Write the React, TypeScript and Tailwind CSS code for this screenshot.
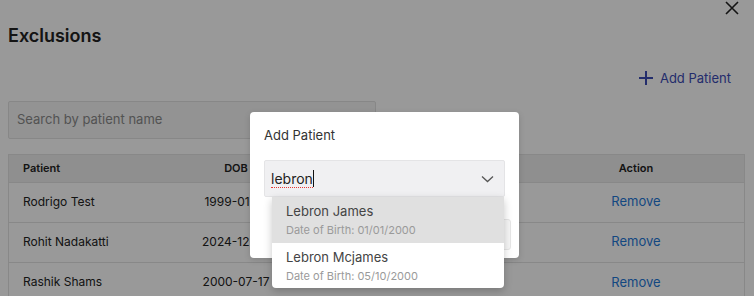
import React from "react";

const rows = [
  { name: "Rodrigo Test", dob: "1999-01-01" },
  { name: "Rohit Nadakatti", dob: "2024-12-03" },
  { name: "Rashik Shams", dob: "2000-07-17" },
];

export default function App() {
  return (
    <div className="relative w-[754px] h-[296px] overflow-hidden bg-white font-['Inter',sans-serif] text-[#1f1f1f]">
      {/* page */}
      <div className="flex flex-col px-2 pt-[22px]">
        <h1 className="text-[18px] leading-[28px] font-semibold text-[#222]">Exclusions</h1>
        <div className="flex justify-end pr-[15px] mt-[19px]">
          <button className="flex items-center gap-[6px] text-[13px] leading-[18px] text-[#3b4bb5]">
            <svg width="16" height="16" viewBox="0 0 16 16" fill="none" stroke="currentColor" strokeWidth="2">
              <path d="M8 1v14M1 8h14" />
            </svg>
            Add Patient
          </button>
        </div>
        <div className="mt-[14px] w-[368px] h-[38px] flex items-center px-2 bg-[#f5f5f5] border border-[#e2e2e2] rounded-[2px] text-[13px] text-[#8a8a8a]">
          Search by patient name
        </div>
        <div className="mt-[15px] mr-[1px] border border-[#e3e3e3]">
          <table className="w-full border-collapse text-[12px]">
            <thead>
              <tr className="h-[27px] bg-[#eeeeee] text-[11px] font-semibold text-[#222]">
                <th className="w-[152px] text-left pl-[14px] font-semibold">Patient</th>
                <th className="w-[150px] text-center font-semibold">DOB</th>
                <th className="w-[217px] text-center font-semibold"></th>
                <th className="text-center font-semibold">Action</th>
              </tr>
            </thead>
            <tbody>
              {rows.map((r) => (
                <tr key={r.name} className="h-[40px] border-t border-[#e3e3e3]">
                  <td className="pl-[14px] text-[#222]">{r.name}</td>
                  <td className="text-center text-[#222]">{r.dob}</td>
                  <td className="text-center text-[#222]"></td>
                  <td className="text-center text-[13px] text-[#1f78d8]">Remove</td>
                </tr>
              ))}
            </tbody>
          </table>
        </div>
      </div>
      <button className="absolute right-[15px] top-[1px] text-[#222]">
        <svg width="14" height="14" viewBox="0 0 14 14" fill="none" stroke="currentColor" strokeWidth="1.6">
          <path d="M1 1l12 12M13 1L1 13" />
        </svg>
      </button>

      {/* overlay */}
      <div className="absolute inset-0 bg-black/40" />

      {/* modal */}
      <div className="absolute left-[250px] top-[112px] w-[269px] h-[146px] bg-white rounded-[4px] shadow-[0_2px_6px_rgba(0,0,0,0.15)] px-[14px] pt-[15px]">
        <div className="text-[13px] leading-[16px] text-[#333]">Add Patient</div>
        <div className="mt-[17px] relative h-[37px] w-[241px] bg-[#f0f0f2] border border-[#e4e4e6] rounded-[2px] flex items-center pl-[6px] pr-[10px]">
          <span className="text-[14px] leading-[17px] text-[#222] border-b border-dotted border-[#e53935]">lebron</span>
          <span className="w-[1px] h-[17px] bg-[#111]" />
          <svg className="ml-auto" width="13" height="8" viewBox="0 0 13 8" fill="none" stroke="#555" strokeWidth="1.3">
            <path d="M1 1.5l5.5 5 5.5-5" />
          </svg>
        </div>
        <div className="mt-[22px] ml-auto w-[70px] h-[31px] border border-[#e6e6e6] bg-[#f6f6f6] rounded-[3px] mr-[-6px]" />

        {/* dropdown */}
        <div className="absolute left-[22px] top-[85px] w-[232px] bg-white rounded-b-[4px] shadow-[0_3px_8px_rgba(0,0,0,0.22)] overflow-hidden">
          <div className="h-[46px] bg-[#e0e0e0] pl-[14px] pt-[6px]">
            <div className="text-[13px] leading-[17px] text-[#444]">Lebron James</div>
            <div className="mt-[3px] text-[11px] leading-[14px] text-[#9a9a9a]">Date of Birth: 01/01/2000</div>
          </div>
          <div className="h-[45px] pl-[14px] pt-[6px]">
            <div className="text-[13px] leading-[17px] text-[#444]">Lebron Mcjames</div>
            <div className="mt-[3px] text-[11px] leading-[14px] text-[#9a9a9a]">Date of Birth: 05/10/2000</div>
          </div>
        </div>
      </div>
    </div>
  );
}
